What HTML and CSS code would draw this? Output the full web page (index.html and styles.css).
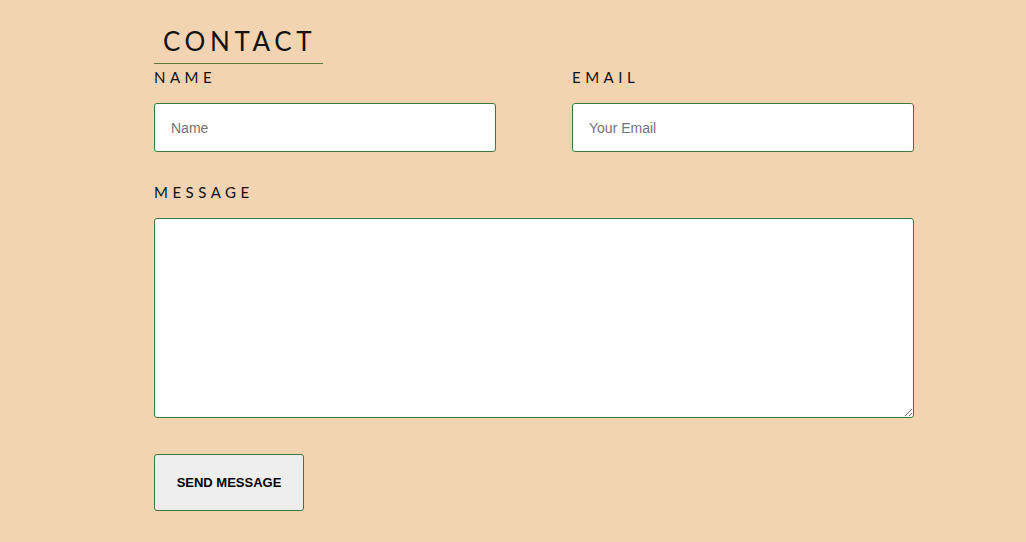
FILE: index.html
```html
<!DOCTYPE html>
<html>
<head>
<meta charset="utf-8">
<link rel="stylesheet" href="styles.css">
</head>
<body>
<section class="contact">
  <h2 class="title">CONTACT</h2>
  <form class="form">
    <div class="row">
      <div class="field">
        <label class="label">NAME</label>
        <input class="input" type="text" placeholder="Name">
      </div>
      <div class="field">
        <label class="label">EMAIL</label>
        <input class="input" type="text" placeholder="Your Email">
      </div>
    </div>
    <div class="field full">
      <label class="label">MESSAGE</label>
      <textarea class="textarea"></textarea>
    </div>
    <button class="btn" type="button">SEND MESSAGE</button>
  </form>
</section>
</body>
</html>
```
FILE: styles.css
```css
html, body {
  margin: 0;
  padding: 0;
  background: #f2d4b2;
  height: 100%;
}
.contact {
  width: 760px;
  margin-left: 154px;
  padding-top: 26px;
  font-family: Lato, "Open Sans", sans-serif;
}
.title {
  display: inline-block;
  margin: 0;
  padding: 0 7px 7px 9px;
  font-size: 26px;
  font-weight: 400;
  letter-spacing: 4.6px;
  line-height: 30px;
  color: #111;
  border-bottom: 1px solid #5f7a3a;
}
.form {
  display: flex;
  flex-direction: column;
}
.row {
  display: flex;
  gap: 76px;
}
.field {
  display: flex;
  flex-direction: column;
  flex: 1;
}
.label {
  font-size: 15px;
  letter-spacing: 4.5px;
  color: #111;
  line-height: 20px;
  margin-top: 3px;
  margin-bottom: 16px;
}
.input {
  box-sizing: border-box;
  height: 49px;
  border: 1px solid #3d7a3a;
  border-radius: 3px;
  background: #fff;
  padding: 0 16px;
  font-family: "Liberation Sans", Arial, sans-serif;
  font-size: 14px;
  outline: none;
}
.input::placeholder {
  color: #757575;
}
.full {
  margin-top: 27px;
}
.textarea {
  box-sizing: border-box;
  height: 200px;
  border: 1px solid #3d7a3a;
  border-radius: 3px;
  background: #fff;
  resize: vertical;
  outline: none;
}
.btn {
  align-self: flex-start;
  box-sizing: border-box;
  margin-top: 36px;
  width: 150px;
  height: 57px;
  border: 1px solid #3d7a3a;
  border-radius: 3px;
  background: #eeeeee;
  font-family: "Liberation Sans", Arial, sans-serif;
  font-weight: 700;
  font-size: 13px;
  color: #000;
  padding: 0;
}
```
